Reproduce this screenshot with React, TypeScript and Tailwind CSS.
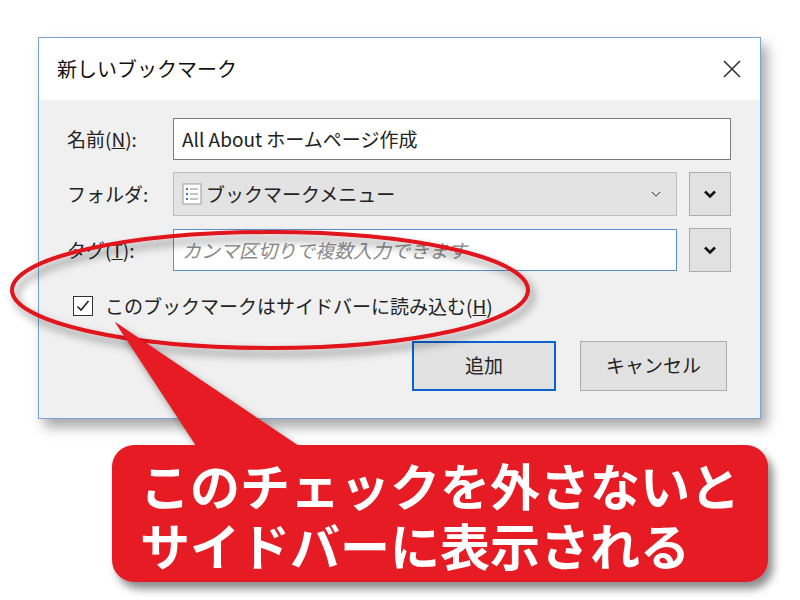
import React from "react";

const F = { fontFamily: '"Noto Sans CJK JP", "Noto Sans", sans-serif' };

function Chevron({ size = 14, w = 2.5 }: { size?: number; w?: number }) {
  return (
    <svg width={size} height={size} viewBox="0 0 14 14">
      <path d="M2 4.5 L7 9.5 L12 4.5" fill="none" stroke="#111" strokeWidth={w} />
    </svg>
  );
}

export default function App() {
  return (
    <div className="relative w-[800px] h-[600px] bg-white overflow-hidden" style={F}>
      <div className="pt-[37px] pl-[38px]">
        <div className="w-[723px] h-[382px] border border-[#7aa3d6] bg-[#f0f0f0] shadow-[6px_8px_12px_rgba(0,0,0,0.35)] flex flex-col">
          <div className="h-[62px] bg-white flex items-center justify-between pl-[18px] pr-[18px]">
            <span className="text-[20px] text-[#111]">新しいブックマーク</span>
            <svg width="20" height="20" viewBox="0 0 20 20"><path d="M2 2 L18 18 M18 2 L2 18" stroke="#333" strokeWidth="1.6" /></svg>
          </div>
          <div className="flex flex-col pt-[18px] pl-[28px] pr-[29px] gap-[12px] text-[19px] text-[#222]">
            <div className="flex items-center">
              <span className="w-[106px]">名前(<u>N</u>):</span>
              <div className="flex-1 h-[42px] bg-white border border-[#7a7a7a] flex items-center px-[8px]">All About ホームページ作成</div>
            </div>
            <div className="flex items-center">
              <span className="w-[106px]">フォルダ:</span>
              <div className="w-[504px] h-[44px] bg-[#e3e3e3] border border-[#bdbdbd] flex items-center px-[8px] gap-[4px]">
                <svg width="20" height="22" viewBox="0 0 20 22"><rect x="1" y="1" width="18" height="20" fill="#fff" stroke="#999" /><g fill="#3a78c8"><rect x="4" y="5" width="2" height="2"/><rect x="4" y="10" width="2" height="2"/><rect x="4" y="15" width="2" height="2"/></g><g stroke="#888"><path d="M8 6h8M8 11h8M8 16h8"/></g></svg>
                <span className="flex-1">ブックマークメニュー</span>
                <span className="pr-[6px]"><Chevron size={12} w={1} /></span>
              </div>
              <div className="ml-[12px] w-[42px] h-[44px] bg-[#e1e1e1] border border-[#adadad] flex items-center justify-center"><Chevron /></div>
            </div>
            <div className="flex items-center">
              <span className="w-[106px]">タグ(<u>T</u>):</span>
              <div className="w-[504px] h-[42px] bg-white border border-[#5b8fd0] flex items-center px-[8px] text-[#8a8a8a] italic">カンマ区切りで複数入力できます</div>
              <div className="ml-[12px] w-[42px] h-[44px] bg-[#e1e1e1] border border-[#adadad] flex items-center justify-center"><Chevron /></div>
            </div>
            <div className="flex items-center gap-[12px] pl-[6px] pt-[8px]">
              <div className="w-[20px] h-[20px] border border-[#333] bg-white flex items-center justify-center">
                <svg width="16" height="16" viewBox="0 0 16 16"><path d="M2.5 8.5 L6 12 L13.5 3" fill="none" stroke="#222" strokeWidth="1.6"/></svg>
              </div>
              <span>このブックマークはサイドバーに読み込む(<u>H</u>)</span>
            </div>
            <div className="flex justify-end gap-[24px] pt-[8px] pr-[4px]">
              <div className="w-[144px] h-[50px] bg-[#e1e1e1] border-2 border-[#0a64d0] flex items-center justify-center">追加</div>
              <div className="w-[147px] h-[50px] bg-[#e1e1e1] border border-[#adadad] flex items-center justify-center">キャンセル</div>
            </div>
          </div>
        </div>
      </div>

      <svg className="absolute left-0 top-0" width="800" height="600">
        <defs>
          <filter id="sh" x="-20%" y="-20%" width="140%" height="140%">
            <feDropShadow dx="4" dy="6" stdDeviation="4" floodColor="#000" floodOpacity="0.45" />
          </filter>
        </defs>
        <ellipse cx="270" cy="290" rx="258" ry="58" fill="none" stroke="#e0121c" strokeWidth="4" filter="url(#sh)" />
        <path d="M115 322 L305 450 L200 450 Z" fill="#e61b23" filter="url(#sh)" />
      </svg>
      <div className="absolute left-[112px] top-[445px] w-[656px] h-[137px] rounded-[22px] bg-[#e61b23] shadow-[5px_7px_8px_rgba(0,0,0,0.45)] flex flex-col justify-center pl-[28px] text-white font-bold text-[50px] leading-[60px]">
        <div>このチェックを外さないと</div>
        <div>サイドバーに表示される</div>
      </div>
      <svg className="absolute left-0 top-0" width="800" height="600">
        <path d="M115 322 L305 452 L200 452 Z" fill="#e61b23" />
      </svg>
    </div>
  );
}
